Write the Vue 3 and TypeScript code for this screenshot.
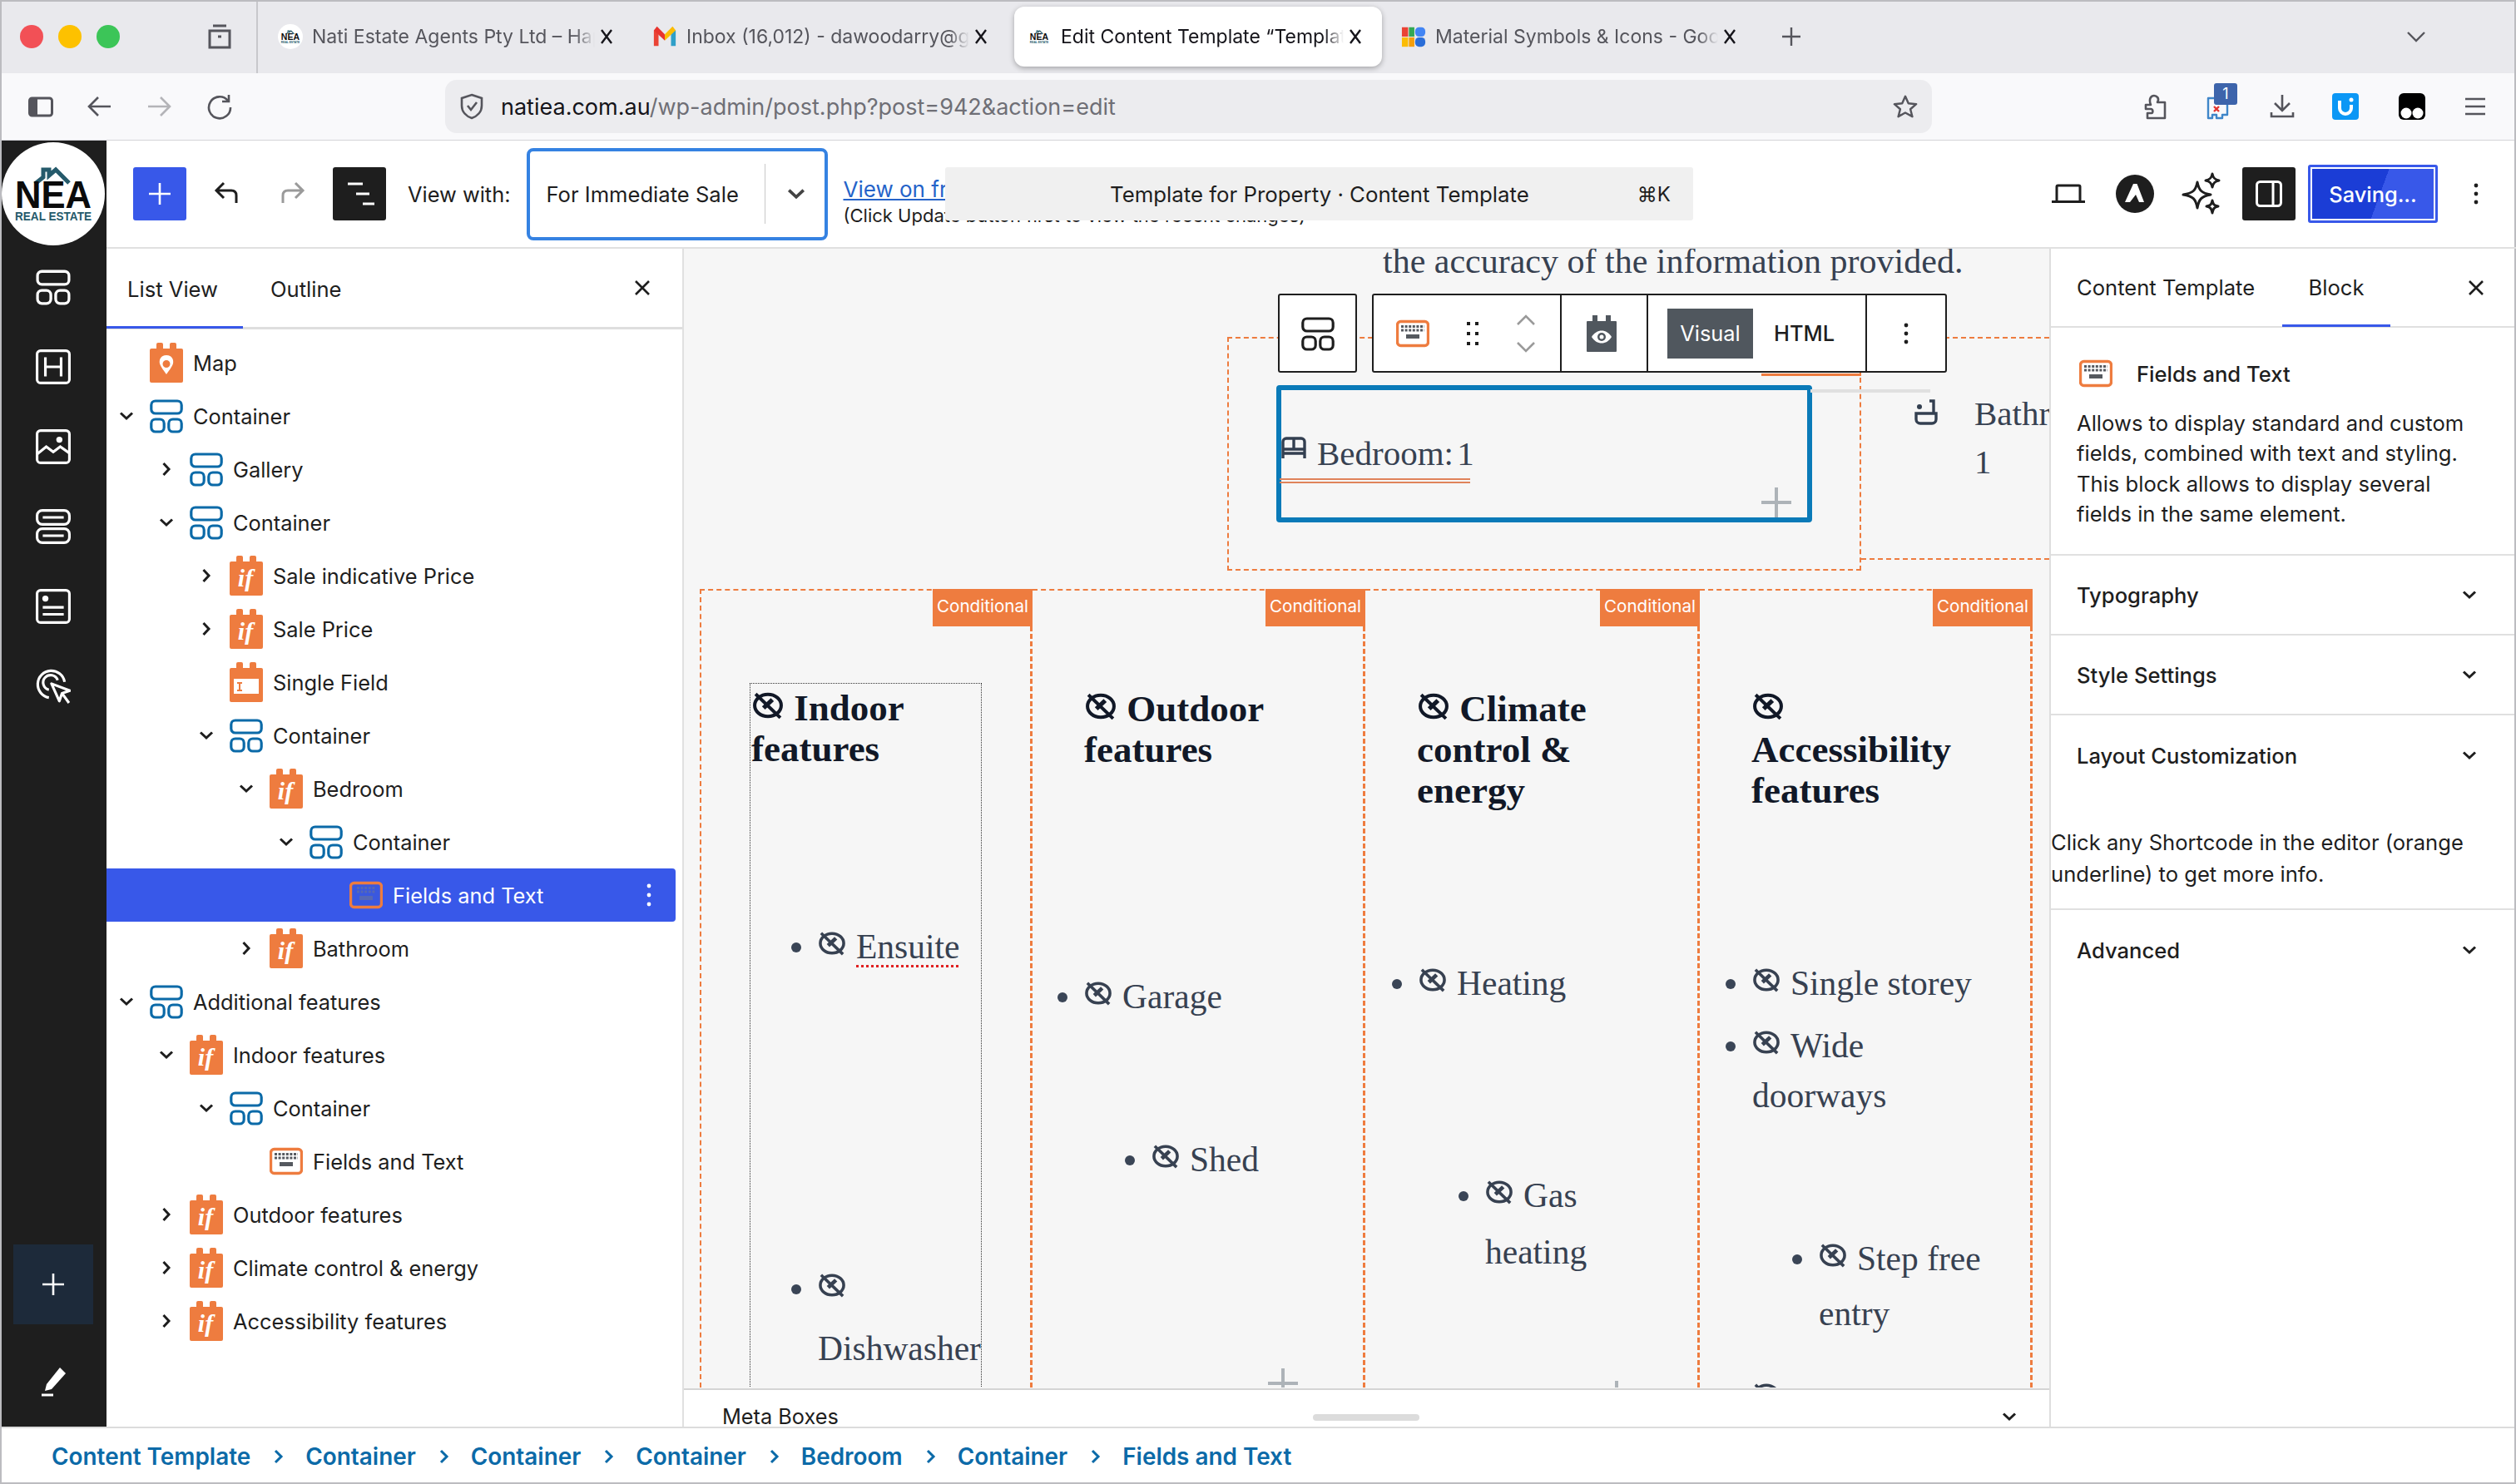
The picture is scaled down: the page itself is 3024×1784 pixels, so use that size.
<script setup lang="ts">
interface TreeRow {
  label: string;
  level: number;
  icon: string;
  arrow?: "down" | "right";
  selected?: boolean;
}
interface ListItem {
  text: string;
  mt: number;
  indent: number;
  lh: number;
  misspelt?: boolean;
}
interface Column {
  title: string;
  items: ListItem[];
  plusTop?: number;
  plusLeft?: number;
  framed?: boolean;
  width: number;
  pad: number;
}

const tabs = [
  { title: "Nati Estate Agents Pty Ltd – Happy Customers", icon: "i-logo", active: false },
  { title: "Inbox (16,012) - dawoodarry@gmail.com", icon: "i-gmail", active: false },
  { title: "Edit Content Template “Template for Property”", icon: "i-logo", active: true },
  { title: "Material Symbols & Icons - Google Fonts", icon: "i-material", active: false },
];

const railIcons = ["i-rail-container", "i-rail-heading", "i-rail-image", "i-rail-rows", "i-rail-card", "i-rail-target"];

const tree: TreeRow[] = [
  { label: "Map", level: 0, icon: "i-map" },
  { label: "Container", level: 0, icon: "i-container", arrow: "down" },
  { label: "Gallery", level: 1, icon: "i-container", arrow: "right" },
  { label: "Container", level: 1, icon: "i-container", arrow: "down" },
  { label: "Sale indicative Price", level: 2, icon: "i-if", arrow: "right" },
  { label: "Sale Price", level: 2, icon: "i-if", arrow: "right" },
  { label: "Single Field", level: 2, icon: "i-field" },
  { label: "Container", level: 2, icon: "i-container", arrow: "down" },
  { label: "Bedroom", level: 3, icon: "i-if", arrow: "down" },
  { label: "Container", level: 4, icon: "i-container", arrow: "down" },
  { label: "Fields and Text", level: 5, icon: "i-kb-sel", selected: true },
  { label: "Bathroom", level: 3, icon: "i-if", arrow: "right" },
  { label: "Additional features", level: 0, icon: "i-container", arrow: "down" },
  { label: "Indoor features", level: 1, icon: "i-if", arrow: "down" },
  { label: "Container", level: 2, icon: "i-container", arrow: "down" },
  { label: "Fields and Text", level: 3, icon: "i-kb" },
  { label: "Outdoor features", level: 1, icon: "i-if", arrow: "right" },
  { label: "Climate control & energy", level: 1, icon: "i-if", arrow: "right" },
  { label: "Accessibility features", level: 1, icon: "i-if", arrow: "right" },
];

const columns: Column[] = [
  {
    title: "Indoor features",
    framed: true,
    width: 400,
    pad: 58,
    items: [
      { text: "Ensuite", mt: 180, indent: 80, lh: 66, misspelt: true },
      { text: "Dishwasher", mt: 342, indent: 80, lh: 72 },
    ],
  },
  {
    title: "Outdoor features",
    width: 400,
    pad: 62,
    plusLeft: 283,
    plusTop: 935,
    items: [
      { text: "Garage", mt: 239, indent: 0, lh: 66 },
      { text: "Shed", mt: 130, indent: 81, lh: 66 },
    ],
  },
  {
    title: "Climate control & energy",
    width: 402,
    pad: 62,
    plusLeft: 284,
    plusTop: 950,
    items: [
      { text: "Heating", mt: 174, indent: 2, lh: 66 },
      { text: "Gas heating", mt: 188, indent: 82, lh: 68 },
    ],
  },
  {
    title: "Accessibility features",
    width: 400,
    pad: 62,
    items: [
      { text: "Single storey", mt: 174, indent: 1, lh: 66 },
      { text: "Wide doorways", mt: 12, indent: 1, lh: 60 },
      { text: "Step free entry", mt: 133, indent: 81, lh: 66 },
      { text: "", mt: 36, indent: 1, lh: 66 },
    ],
  },
];

const panelRows = ["Typography", "Style Settings", "Layout Customization"];
const crumbs = ["Content Template", "Container", "Container", "Container", "Bedroom", "Container", "Fields and Text"];
</script>

<template>
  <div class="app">
    <svg class="sprite" aria-hidden="true">
      <symbol id="i-logo" viewBox="0 0 124 124">
        <circle cx="62" cy="62" r="62" fill="#fff" />
        <path d="M40 50 L50 42 V33 H57 V40 L65 33 L81 49" fill="none" stroke="#255a6b" stroke-width="5" />
        <text x="62" y="79" text-anchor="middle" font-family="Liberation Sans" font-weight="700" font-size="47" textLength="92" lengthAdjust="spacingAndGlyphs" fill="#0b0b0b">NEA</text>
        <text x="62" y="94" text-anchor="middle" font-family="Liberation Sans" font-weight="700" font-size="15" textLength="92" lengthAdjust="spacingAndGlyphs" fill="#255a6b">REAL ESTATE</text>
      </symbol>
      <symbol id="i-gmail" viewBox="0 0 32 32">
        <path d="M24 28 V6 L30 8 V28 Z" fill="#2f9fc8" />
        <path d="M30 8 L26 3 L16 13 L16 21 Z" fill="#fbbc04" />
        <path d="M2 28 V8 L8 6 V28 Z" fill="#ea4335" />
        <path d="M2 8 L6 3 L16 13 L16 21 Z" fill="#e8342e" />
      </symbol>
      <symbol id="i-material" viewBox="0 0 32 32">
        <rect x="1" y="4" width="8" height="12" fill="#ea4335" />
        <rect x="1" y="17" width="8" height="12" fill="#fbbc04" />
        <rect x="10" y="4" width="7" height="12" fill="#34a853" />
        <rect x="10" y="17" width="7" height="12" fill="#f59e0b" />
        <rect x="18" y="4" width="13" height="12" rx="5" fill="#4285f4" />
        <rect x="18" y="17" width="13" height="12" rx="5" fill="#2b6ed8" />
      </symbol>
      <symbol id="i-x" viewBox="0 0 20 20">
        <path d="M4 2 L16 18 M16 2 L4 18" stroke="currentColor" stroke-width="2.4" fill="none" />
      </symbol>
      <symbol id="i-chev" viewBox="0 0 24 24">
        <path d="M5 8.5 L12 15 L19 8.5" stroke="currentColor" stroke-width="3" fill="none" />
      </symbol>
      <symbol id="i-container" viewBox="0 0 40 48">
        <rect x="1.8" y="6" width="36.4" height="15" rx="5" fill="none" stroke="currentColor" stroke-width="3.2" />
        <rect x="1.8" y="28" width="15.4" height="15" rx="5" fill="none" stroke="currentColor" stroke-width="3.2" />
        <rect x="22.8" y="28" width="15.4" height="15" rx="5" fill="none" stroke="currentColor" stroke-width="3.2" />
      </symbol>
      <symbol id="i-if" viewBox="0 0 40 48">
        <rect x="8" y="0" width="8" height="12" rx="2" fill="#ee7c3f" />
        <rect x="24" y="0" width="8" height="12" rx="2" fill="#ee7c3f" />
        <rect x="0" y="7" width="40" height="41" rx="2" fill="#ee7c3f" />
        <text x="19" y="37" text-anchor="middle" font-family="Liberation Serif" font-style="italic" font-weight="700" font-size="30" fill="#fff">if</text>
      </symbol>
      <symbol id="i-map" viewBox="0 0 40 48">
        <rect x="8" y="0" width="8" height="12" rx="2" fill="#ee7c3f" />
        <rect x="24" y="0" width="8" height="12" rx="2" fill="#ee7c3f" />
        <rect x="0" y="7" width="40" height="41" rx="2" fill="#ee7c3f" />
        <path fill-rule="evenodd" d="M20 15 C13 15 11 21 12 25 C13 29 18 35 20 38 C22 35 27 29 28 25 C29 21 27 15 20 15 Z M20 21 A4.5 4.5 0 1 1 20 30 A4.5 4.5 0 1 1 20 21 Z" fill="#fff" />
      </symbol>
      <symbol id="i-field" viewBox="0 0 40 48">
        <rect x="8" y="0" width="8" height="12" rx="2" fill="#ee7c3f" />
        <rect x="24" y="0" width="8" height="12" rx="2" fill="#ee7c3f" />
        <rect x="0" y="7" width="40" height="41" rx="2" fill="#ee7c3f" />
        <rect x="5" y="20" width="30" height="18" fill="#fff" />
        <path d="M9 25 H15 M9 34 H15 M12 25 V34" stroke="#ee7c3f" stroke-width="2" fill="none" />
      </symbol>
      <symbol id="i-kb" viewBox="0 0 40 48">
        <rect x="1.5" y="9.5" width="37" height="29" rx="4" fill="#fff" stroke="#ee7c3f" stroke-width="3.4" />
        <path d="M6 15.5 H34 M6 20 H34" stroke="#55595f" stroke-width="3" stroke-dasharray="3 1.6" fill="none" />
        <rect x="12" y="25" width="16" height="5" fill="#55595f" />
      </symbol>
      <symbol id="i-kb-sel" viewBox="0 0 40 48">
        <rect x="1.5" y="9.5" width="37" height="29" rx="4" fill="#3a58df" stroke="#ee7c3f" stroke-width="3.4" />
        <path d="M9 15.5 H31 M9 20 H31" stroke="#5668b5" stroke-width="3" stroke-dasharray="3 1.6" fill="none" />
        <rect x="12" y="25" width="16" height="5" fill="#5668b5" />
      </symbol>
      <symbol id="i-eye-off" viewBox="0 0 36 32">
        <ellipse cx="18" cy="16" rx="15" ry="12.5" fill="none" stroke="currentColor" stroke-width="3.8" />
        <path d="M4 3 L32 30" stroke="currentColor" stroke-width="3.8" fill="none" />
        <path d="M13 19 L23 9.5" stroke="currentColor" stroke-width="5" fill="none" />
      </symbol>
      <symbol id="i-rail-heading" viewBox="0 0 40 40">
        <rect x="1.5" y="1.5" width="37" height="37" rx="4" fill="none" stroke="currentColor" stroke-width="3" />
        <path d="M11 9 V31 M29 9 V31 M11 20 H29" stroke="currentColor" stroke-width="3" fill="none" />
      </symbol>
      <symbol id="i-rail-image" viewBox="0 0 40 40">
        <rect x="1.5" y="1.5" width="37" height="37" rx="4" fill="none" stroke="currentColor" stroke-width="3" />
        <path d="M2 28 L12 20 L20 26 L28 20 L38 27" stroke="currentColor" stroke-width="3" fill="none" />
        <circle cx="27" cy="12" r="3.5" fill="currentColor" />
      </symbol>
      <symbol id="i-rail-rows" viewBox="0 0 40 40">
        <rect x="1.5" y="1.5" width="37" height="16" rx="6" fill="none" stroke="currentColor" stroke-width="3" />
        <rect x="1.5" y="22.5" width="37" height="16" rx="6" fill="none" stroke="currentColor" stroke-width="3" />
        <path d="M8 9.5 H32 M8 30.5 H32" stroke="currentColor" stroke-width="3" fill="none" />
      </symbol>
      <symbol id="i-rail-card" viewBox="0 0 40 40">
        <rect x="1.5" y="1.5" width="37" height="37" rx="4" fill="none" stroke="currentColor" stroke-width="3" />
        <circle cx="11" cy="11" r="3.5" fill="currentColor" />
        <path d="M8 21 H32 M8 29 H32" stroke="currentColor" stroke-width="3" fill="none" />
      </symbol>
      <symbol id="i-rail-target" viewBox="0 0 40 40">
        <path d="M15 33 A15.5 15.5 0 1 1 33 15" stroke="currentColor" stroke-width="3" fill="none" />
        <path d="M15 24 A8.5 8.5 0 1 1 25 13" stroke="currentColor" stroke-width="3" fill="none" />
        <path d="M18 17 L39 25 L30 28 L27 37 Z M30 28 L38 39" stroke="currentColor" stroke-width="3" stroke-linejoin="round" fill="none" />
      </symbol>
    </svg>

    <!-- browser chrome -->
    <header class="tabbar">
      <span class="light red"></span>
      <span class="light amber"></span>
      <span class="light green"></span>
      <svg class="group-ic" viewBox="0 0 30 30">
        <path d="M7 2 H23 M3 8 H27 V28 H3 Z M13 15 H17" fill="none" stroke="#55555c" stroke-width="3" />
      </svg>
      <span class="tab-sep"></span>
      <div class="tabs">
        <div v-for="tab in tabs" :key="tab.title" class="tab" :class="{ active: tab.active }">
          <svg class="tab-ic"><use :href="'#' + tab.icon" /></svg>
          <span class="tab-title">{{ tab.title }}</span>
          <svg class="tab-x"><use href="#i-x" /></svg>
        </div>
      </div>
      <svg class="new-tab" viewBox="0 0 24 24">
        <path d="M12 1 V23 M1 12 H23" stroke="#55555c" stroke-width="2.4" />
      </svg>
      <svg class="tab-list" viewBox="0 0 24 24">
        <path d="M2 7 L12 17 L22 7" stroke="#55555c" stroke-width="2.4" fill="none" />
      </svg>
    </header>

    <nav class="navbar">
      <svg class="nav-ic first" viewBox="0 0 32 32">
        <rect x="2.5" y="6" width="27" height="21" rx="3" fill="none" stroke="#55555c" stroke-width="3" />
        <rect x="4" y="7" width="8" height="19" fill="#55555c" />
      </svg>
      <svg class="nav-ic" viewBox="0 0 32 32">
        <path d="M29 16 H4 M14 5 L3 16 L14 27" fill="none" stroke="#55555c" stroke-width="2.6" />
      </svg>
      <svg class="nav-ic" viewBox="0 0 32 32">
        <path d="M3 16 H28 M18 5 L29 16 L18 27" fill="none" stroke="#b4b4b8" stroke-width="2.6" />
      </svg>
      <svg class="nav-ic reload" viewBox="0 0 32 32">
        <path d="M26 9 A13 13 0 1 0 29 17 M27 2 V10 H19" fill="none" stroke="#55555c" stroke-width="2.6" />
      </svg>
      <div class="urlbar">
        <svg class="shield" viewBox="0 0 28 32">
          <path d="M14 2 L26 6 V15 C26 23 20 28 14 30 C8 28 2 23 2 15 V6 Z M9 15 L13 20 L20 11" fill="none" stroke="#55555c" stroke-width="2.6" />
        </svg>
        <span class="url"><b>natiea.com.au</b>/wp-admin/post.php?post=942&amp;action=edit</span>
        <svg class="star" viewBox="0 0 32 32">
          <path d="M16 3 L20 12 L30 13 L22.5 19.5 L25 29 L16 24 L7 29 L9.5 19.5 L2 13 L12 12 Z" fill="none" stroke="#55555c" stroke-width="2.6" stroke-linejoin="round" />
        </svg>
      </div>
      <div class="extensions">
        <svg class="ext" viewBox="0 0 32 32">
          <path d="M4 14 H10 C7 6 11 3 14 3 C17 3 21 6 18 11 H27 V30 H6 V24 H11 C13 24 13 19 10 19 H4 Z" fill="none" stroke="#55555c" stroke-width="2.6" stroke-linejoin="round" />
        </svg>
        <div class="ext badge-wrap">
          <svg viewBox="0 0 32 32" width="32" height="32">
            <path d="M3 6 H26 V26 H20 V30 H13 V26 H8 V30 H3 Z" fill="none" stroke="#3f86c9" stroke-width="2.4" stroke-linejoin="round" />
            <path d="M10 16 L16 22 M16 16 L10 22" stroke="#e3342f" stroke-width="2.4" />
          </svg>
          <span class="ext-count">1</span>
        </div>
        <svg class="ext" viewBox="0 0 32 32">
          <path d="M16 2 V21 M7 12 L16 21 L25 12 M3 23 V28 H29 V23" fill="none" stroke="#55555c" stroke-width="2.6" />
        </svg>
        <svg class="ext" viewBox="0 0 32 32">
          <rect width="32" height="32" rx="4" fill="#0b97f5" />
          <path d="M9 9 V18 A7 7 0 0 0 23 18 V14" fill="none" stroke="#fff" stroke-width="4" />
          <circle cx="23" cy="8" r="2.5" fill="#fff" />
        </svg>
        <svg class="ext black" viewBox="0 0 32 32">
          <rect width="32" height="32" rx="6" fill="#000" />
          <circle cx="9" cy="24" r="6.5" fill="#fff" />
          <circle cx="23" cy="24" r="6.5" fill="#fff" />
        </svg>
        <svg class="ext" viewBox="0 0 32 32">
          <path d="M4 7 H28 M4 16 H28 M4 25 H28" stroke="#55555c" stroke-width="2.6" />
        </svg>
      </div>
    </nav>

    <!-- wordpress editor -->
    <div class="wp">
      <aside class="rail">
        <svg class="rail-logo"><use href="#i-logo" /></svg>
        <div v-for="icon in railIcons" :key="icon" class="rail-item">
          <svg v-if="icon === 'i-rail-container'" viewBox="0 0 40 48" class="rail-ic tall"><use href="#i-container" /></svg>
          <svg v-else viewBox="0 0 40 40" class="rail-ic"><use :href="'#' + icon" /></svg>
        </div>
        <div class="rail-add">
          <svg viewBox="0 0 26 26" width="26" height="26">
            <path d="M13 0 V26 M0 13 H26" stroke="#fff" stroke-width="2.6" />
          </svg>
        </div>
        <div class="rail-item rail-pen">
          <svg viewBox="0 0 32 40" width="32" height="40">
            <path d="M24 4 L31 11 L14 30 L6 32 L8 24 Z" fill="#fff" />
            <path d="M2 37 H16" stroke="#fff" stroke-width="3" />
          </svg>
        </div>
      </aside>

      <div class="editor">
        <div class="wp-toolbar">
          <button class="tb-add">
            <svg viewBox="0 0 26 26" width="26" height="26"><path d="M13 0 V26 M0 13 H26" stroke="#fff" stroke-width="2.6" /></svg>
          </button>
          <svg class="undo" viewBox="0 0 32 32">
            <path d="M28 27 V18 C28 14 26 12 22 12 H5 M13 3 L4 12 L13 21" fill="none" stroke="#1e1e1e" stroke-width="3" />
          </svg>
          <svg class="redo" viewBox="0 0 32 32">
            <path d="M4 27 V18 C4 14 6 12 10 12 H27 M19 3 L28 12 L19 21" fill="none" stroke="#9a9a9a" stroke-width="3" />
          </svg>
          <button class="tb-list">
            <svg viewBox="0 0 36 36" width="36" height="36">
              <path d="M4 6 H22 M14 18 H30 M22 30 H36" stroke="#fff" stroke-width="3.2" />
            </svg>
          </button>
          <span class="view-with">View with:</span>
          <div class="select">
            <span>For Immediate Sale</span>
            <i class="select-div"></i>
            <svg class="select-chev"><use href="#i-chev" /></svg>
          </div>
          <div class="view-link">
            <a>View on front-end</a>
            <small>(Click Update button first to view the recent changes)</small>
          </div>
          <div class="command">
            <span class="command-title">Template for Property · Content Template</span>
            <span class="command-key">⌘K</span>
          </div>
          <div class="tb-right">
            <svg class="laptop" viewBox="0 0 40 24">
              <path d="M6 20 V3.5 A1.5 1.5 0 0 1 7.5 2 H32.5 A1.5 1.5 0 0 1 34 3.5 V20" fill="none" stroke="#1e1e1e" stroke-width="3" />
              <path d="M0 21.5 H40" stroke="#1e1e1e" stroke-width="3" />
            </svg>
            <svg class="astra" viewBox="0 0 46 46">
              <circle cx="23" cy="23" r="23" fill="#1e1e1e" />
              <path d="M21 11 H25.5 L34 33 H28 L24 24 L17 33 H11 Z" fill="#fff" />
            </svg>
            <svg class="sparkle" viewBox="0 0 52 52">
              <path d="M20 12 C22 22 25 25 36 27 C25 29 22 32 20 43 C18 32 15 29 3 27 C15 25 18 22 20 12 Z M38 2 C39 7 41 9 46 10 C41 11 39 13 38 18 C37 13 35 11 30 10 C35 9 37 7 38 2 Z M38 34 C39 39 40 40 45 41 C40 42 39 44 38 49 C37 44 36 42 31 41 C36 40 37 39 38 34 Z" fill="none" stroke="#1e1e1e" stroke-width="3" stroke-linejoin="round" />
            </svg>
            <button class="tb-panel">
              <svg viewBox="0 0 32 32" width="32" height="32">
                <rect x="1.5" y="1.5" width="29" height="29" rx="4" fill="none" stroke="#fff" stroke-width="3" />
                <path d="M21 2 V30" stroke="#fff" stroke-width="3" />
              </svg>
            </button>
            <button class="saving">Saving...</button>
            <svg class="more" viewBox="0 0 32 32">
              <circle cx="16" cy="6" r="2.4" fill="#1e1e1e" />
              <circle cx="16" cy="16" r="2.4" fill="#1e1e1e" />
              <circle cx="16" cy="26" r="2.4" fill="#1e1e1e" />
            </svg>
          </div>
        </div>

        <div class="workspace">
          <section class="listview">
            <div class="lv-head">
              <span class="lv-tab current">List View</span>
              <span class="lv-tab">Outline</span>
              <svg class="lv-close" viewBox="0 0 20 20"><path d="M2 2 L18 18 M18 2 L2 18" stroke="#1e1e1e" stroke-width="2.6" /></svg>
            </div>
            <div class="lv-rows">
              <div
                v-for="(row, i) in tree"
                :key="i"
                class="lv-row"
                :class="{ selected: row.selected }"
                :style="{ paddingLeft: 8 + row.level * 48 + 'px' }"
              >
                <span class="lv-arrow">
                  <svg v-if="row.arrow" :class="row.arrow"><use href="#i-chev" /></svg>
                </span>
                <svg class="lv-ic"><use :href="'#' + row.icon" /></svg>
                <span class="lv-label">{{ row.label }}</span>
                <svg v-if="row.selected" class="lv-more" viewBox="0 0 8 32">
                  <circle cx="4" cy="5" r="2.4" fill="#fff" />
                  <circle cx="4" cy="16" r="2.4" fill="#fff" />
                  <circle cx="4" cy="27" r="2.4" fill="#fff" />
                </svg>
              </div>
            </div>
          </section>

          <section class="canvas-wrap">
            <div class="canvas">
              <p class="note">the accuracy of the information provided.</p>

              <div class="block-toolbar">
                <div class="bt-group bt-parent">
                  <svg viewBox="0 0 40 48" width="40" height="48" class="bt-dark"><use href="#i-container" /></svg>
                </div>
                <div class="bt-group bt-main">
                  <div class="bt-seg bt-move">
                    <svg class="bt-kb"><use href="#i-kb" /></svg>
                    <svg class="bt-drag" viewBox="0 0 20 32">
                      <path d="M3 2 H7 V6 H3 Z M13 2 H17 V6 H13 Z M3 14 H7 V18 H3 Z M13 14 H17 V18 H13 Z M3 26 H7 V30 H3 Z M13 26 H17 V30 H13 Z" fill="#1e1e1e" />
                    </svg>
                    <div class="bt-arrows">
                      <svg viewBox="0 0 24 14" width="24" height="14"><path d="M2 12 L12 2 L22 12" fill="none" stroke="#9a9a9a" stroke-width="2.6" /></svg>
                      <svg viewBox="0 0 24 14" width="24" height="14"><path d="M2 2 L12 12 L22 2" fill="none" stroke="#9a9a9a" stroke-width="2.6" /></svg>
                    </div>
                  </div>
                  <div class="bt-seg bt-eye">
                    <svg viewBox="0 0 36 44" width="36" height="44">
                      <rect x="7" y="0" width="6" height="8" fill="#50575e" />
                      <rect x="23" y="0" width="6" height="8" fill="#50575e" />
                      <rect x="0" y="7" width="36" height="37" rx="1" fill="#50575e" />
                      <path d="M6 26 C12 16 24 16 30 26 C24 36 12 36 6 26 Z" fill="#fff" />
                      <circle cx="18" cy="26" r="5" fill="#50575e" />
                      <circle cx="18" cy="26" r="2.5" fill="#fff" />
                    </svg>
                  </div>
                  <div class="bt-seg bt-mode">
                    <span class="bt-visual">Visual</span>
                    <span class="bt-html">HTML</span>
                  </div>
                  <div class="bt-seg bt-dots">
                    <svg class="more" viewBox="0 0 32 32">
                      <circle cx="16" cy="6" r="2.4" fill="#1e1e1e" />
                      <circle cx="16" cy="16" r="2.4" fill="#1e1e1e" />
                      <circle cx="16" cy="26" r="2.4" fill="#1e1e1e" />
                    </svg>
                  </div>
                </div>
              </div>

              <div class="upper">
                <div class="cond-box">
                  <i class="orange-bit"></i>
                  <div class="picked">
                    <div class="bed-line">
                      <svg class="bed-ic" viewBox="0 0 30 26">
                        <path d="M2 26 V6 A4 4 0 0 1 6 2 H24 A4 4 0 0 1 28 6 V26 M2 15 H28 M2 20 H28 M15 3 V14" fill="none" stroke="#333f50" stroke-width="3.4" />
                      </svg>
                      <span>Bedroom: 1</span>
                    </div>
                    <svg class="picked-plus" viewBox="0 0 36 36"><path d="M18 0 V36 M0 18 H36" stroke="#adb3b8" stroke-width="4" /></svg>
                  </div>
                  <i class="gray-bit"></i>
                </div>
                <div class="bath-box">
                  <svg class="bath-ic" viewBox="0 0 30 34">
                    <path d="M3 19 H27 V26 A5 5 0 0 1 22 31 H8 A5 5 0 0 1 3 26 Z" fill="none" stroke="#333f50" stroke-width="3.4" />
                    <path d="M24 19 V4 H19" fill="none" stroke="#333f50" stroke-width="3.4" />
                    <circle cx="7" cy="11" r="3" fill="#333f50" />
                  </svg>
                  <div class="bath-text">
                    <div>Bathroom: 1</div>
                    <div>1</div>
                  </div>
                </div>
              </div>

              <div class="columns">
                <article
                  v-for="col in columns"
                  :key="col.title"
                  class="col"
                  :style="{ width: col.width + 'px', paddingLeft: col.pad + 'px' }"
                >
                  <span class="badge">Conditional</span>
                  <div class="col-inner" :class="{ framed: col.framed }">
                    <h3 class="col-title">
                      <svg class="eye-big"><use href="#i-eye-off" /></svg>
                      {{ col.title }}
                    </h3>
                    <ul class="col-list">
                      <li
                        v-for="item in col.items"
                        :key="item.text"
                        :style="{ marginTop: item.mt + 'px', marginLeft: item.indent + 'px', lineHeight: item.lh + 'px' }"
                      >
                        <svg class="eye-small"><use href="#i-eye-off" /></svg>
                        <span :class="{ misspelt: item.misspelt }">{{ item.text }}</span>
                      </li>
                    </ul>
                  </div>
                  <svg
                    v-if="col.plusTop"
                    class="col-plus"
                    viewBox="0 0 36 36"
                    :style="{ left: col.plusLeft + 'px', top: col.plusTop + 'px' }"
                  >
                    <path d="M18 0 V36 M0 18 H36" stroke="#adb3b8" stroke-width="4" />
                  </svg>
                </article>
              </div>
            </div>

            <div class="meta">
              <span>Meta Boxes</span>
              <i class="meta-handle"></i>
              <svg class="meta-chev"><use href="#i-chev" /></svg>
            </div>
          </section>

          <aside class="inspector">
            <div class="ins-head">
              <span class="ins-tab">Content Template</span>
              <span class="ins-tab current">Block</span>
              <svg class="ins-close" viewBox="0 0 20 20"><path d="M2 2 L18 18 M18 2 L2 18" stroke="#1e1e1e" stroke-width="2.6" /></svg>
            </div>
            <div class="ins-card">
              <div class="ins-card-title">
                <svg class="ins-kb"><use href="#i-kb" /></svg>
                <span>Fields and Text</span>
              </div>
              <p>Allows to display standard and custom fields, combined with text and styling. This block allows to display several fields in the same element.</p>
            </div>
            <div v-for="(name, i) in panelRows" :key="name" class="ins-row" :class="{ last: i === panelRows.length - 1 }">
              <span>{{ name }}</span>
              <svg class="ins-chev"><use href="#i-chev" /></svg>
            </div>
            <p class="ins-help">Click any Shortcode in the editor (orange underline) to get more info.</p>
            <div class="ins-row advanced">
              <span>Advanced</span>
              <svg class="ins-chev"><use href="#i-chev" /></svg>
            </div>
          </aside>
        </div>
      </div>
    </div>

    <footer class="crumbs">
      <template v-for="(crumb, i) in crumbs" :key="i">
        <svg v-if="i > 0" class="crumb-chev" viewBox="0 0 24 24"><path d="M9 5 L16 12 L9 19" fill="none" stroke="#0b6aa8" stroke-width="3" /></svg>
        <span class="crumb">{{ crumb }}</span>
      </template>
    </footer>
  </div>
</template>

<style>
html,
body {
  margin: 0;
  background: #fff;
}
</style>

<style scoped>
.app {
  position: relative;
  width: 3024px;
  height: 1784px;
  overflow: hidden;
  background: #fff;
  font-family: Inter, "Liberation Sans", sans-serif;
  color: #1e1e1e;
  outline: 2px solid #bcbcc0;
  outline-offset: -2px;
}
.sprite {
  position: absolute;
  width: 0;
  height: 0;
}
button {
  border: 0;
  padding: 0;
  font-family: inherit;
}

/* browser chrome */
.tabbar {
  height: 88px;
  box-sizing: border-box;
  background: #e9e9ed;
  display: flex;
  align-items: center;
  padding-left: 24px;
}
.light {
  width: 28px;
  height: 28px;
  border-radius: 50%;
  margin-right: 18px;
}
.red { background: #f25056; }
.amber { background: #fdc100; }
.green { background: #3cc558; margin-right: 0; }
.group-ic {
  width: 30px;
  height: 30px;
  margin-left: 105px;
}
.tab-sep {
  width: 2px;
  height: 88px;
  margin-left: 29px;
  background: #c8c8cc;
}
.tabs {
  display: flex;
  gap: 8px;
  margin-left: 9px;
}
.tab {
  width: 442px;
  height: 72px;
  box-sizing: border-box;
  padding: 0 22px 0 15px;
  display: flex;
  align-items: center;
  color: #55555c;
  font-size: 23px;
  border-radius: 12px;
}
.tab.active {
  background: #fff;
  color: #15141a;
  box-shadow: 0 2px 6px rgba(0, 0, 0, 0.3);
}
.tab-ic {
  width: 30px;
  height: 30px;
  flex: none;
}
.tab-title {
  flex: 1;
  margin: 0 4px 0 11px;
  overflow: hidden;
  white-space: nowrap;
  -webkit-mask-image: linear-gradient(90deg, #000 93%, transparent);
  mask-image: linear-gradient(90deg, #000 93%, transparent);
}
.tab-x {
  width: 20px;
  height: 20px;
  flex: none;
  color: #15141a;
}
.new-tab {
  width: 24px;
  height: 24px;
  margin-left: 30px;
}
.tab-list {
  width: 24px;
  height: 24px;
  margin-left: auto;
  margin-right: 108px;
}

.navbar {
  height: 81px;
  box-sizing: border-box;
  background: #f9f9fb;
  border-bottom: 1px solid #d4d4d8;
  display: flex;
  align-items: center;
  padding-left: 33px;
}
.nav-ic {
  width: 32px;
  height: 32px;
  margin-left: 39px;
}
.nav-ic.first {
  margin-left: 0;
}
.nav-ic.reload {
  margin-left: 41px;
}
.urlbar {
  width: 1787px;
  height: 64px;
  margin-left: 255px;
  box-sizing: border-box;
  padding: 0 17px 0 18px;
  background: #ececef;
  border-radius: 14px;
  display: flex;
  align-items: center;
}
.shield {
  width: 28px;
  height: 32px;
}
.url {
  margin-left: 21px;
  font-size: 27px;
  color: #6f6f76;
}
.url b {
  font-weight: 400;
  color: #15141a;
}
.star {
  width: 30px;
  height: 30px;
  margin-left: auto;
}
.extensions {
  display: flex;
  align-items: center;
  gap: 44px;
  margin-left: 253px;
}
.ext {
  position: relative;
  width: 32px;
  height: 32px;
  flex: none;
}
.ext.black {
  margin-left: 4px;
}
.ext-count {
  position: absolute;
  left: 10px;
  top: -12px;
  width: 28px;
  height: 26px;
  border-radius: 3px;
  background: #3d64ab;
  color: #fff;
  font-size: 18px;
  text-align: center;
  line-height: 26px;
}

/* editor layout */
.wp {
  display: flex;
  height: 1546px;
}
.rail {
  width: 128px;
  flex: none;
  background: #1e1e1e;
  display: flex;
  flex-direction: column;
  align-items: center;
  color: #fff;
}
.rail-logo {
  width: 124px;
  height: 124px;
  margin: 2px 0 2px;
  flex: none;
}
.rail-item {
  height: 96px;
  flex: none;
  display: flex;
  align-items: center;
  justify-content: center;
}
.rail-ic {
  width: 42px;
  height: 42px;
}
.rail-ic.tall {
  width: 42px;
  height: 50px;
}
.rail-add {
  width: 96px;
  height: 96px;
  margin-top: auto;
  flex: none;
  background: #1d2a3a;
  display: flex;
  align-items: center;
  justify-content: center;
}
.rail-pen {
  margin-top: 20px;
  margin-bottom: 7px;
}
.editor {
  flex: 1;
  min-width: 0;
  display: flex;
  flex-direction: column;
}
.wp-toolbar {
  position: relative;
  height: 130px;
  flex: none;
  box-sizing: border-box;
  border-bottom: 2px solid #e0e0e0;
  display: flex;
  align-items: center;
  padding-left: 32px;
  padding-right: 32px;
}
.tb-add,
.tb-list {
  width: 64px;
  height: 64px;
  flex: none;
  display: flex;
  align-items: center;
  justify-content: center;
  border-radius: 3px;
  background: #3858e9;
}
.tb-list {
  background: #1e1e1e;
  margin-left: 32px;
}
.undo,
.redo {
  width: 32px;
  height: 32px;
  flex: none;
  margin-left: 32px;
}
.redo {
  margin-left: 48px;
}
.view-with {
  margin-left: 26px;
  font-size: 25.4px;
  white-space: nowrap;
}
.select {
  width: 362px;
  height: 111px;
  flex: none;
  margin-left: 19px;
  box-sizing: border-box;
  border: 4px solid #3582e2;
  border-radius: 8px;
  padding-left: 20px;
  display: flex;
  align-items: center;
  font-size: 25.6px;
  white-space: nowrap;
}
.select-div {
  width: 1px;
  height: 72px;
  margin-left: 31px;
  background: #c8c8c8;
}
.select-chev {
  width: 30px;
  height: 30px;
  margin-left: 22px;
  color: #444;
}
.view-link {
  margin-left: 19px;
  padding-top: 18px;
  flex: none;
  white-space: nowrap;
  display: flex;
  flex-direction: column;
}
.view-link a {
  font-size: 26px;
  line-height: 34px;
  color: #2563c9;
  text-decoration: underline;
}
.view-link small {
  font-size: 22px;
  line-height: 28px;
  color: #1e1e1e;
}
.command {
  position: absolute;
  left: 1008px;
  top: 32px;
  width: 899px;
  height: 64px;
  box-sizing: border-box;
  background: #f0f0f0;
  border-radius: 3px;
  display: flex;
  align-items: center;
  font-size: 25.8px;
}
.command-title {
  margin-left: 198px;
}
.command-key {
  margin-left: auto;
  margin-right: 27px;
  font-size: 24px;
}
.tb-right {
  position: absolute;
  right: 32px;
  top: 0;
  height: 128px;
  display: flex;
  align-items: center;
}
.laptop {
  width: 40px;
  height: 24px;
}
.astra {
  width: 46px;
  height: 46px;
  margin-left: 37px;
}
.sparkle {
  width: 52px;
  height: 52px;
  margin-left: 32px;
}
.tb-panel {
  width: 64px;
  height: 64px;
  margin-left: 22px;
  background: #1e1e1e;
  border-radius: 3px;
  display: flex;
  align-items: center;
  justify-content: center;
}
.saving {
  width: 156px;
  height: 70px;
  margin-left: 15px;
  border: 3px solid #3858e9;
  box-shadow: inset 0 0 0 2px #fff;
  background: linear-gradient(110deg, #1b3dd6 55%, #3858e9 55%);
  color: #fff;
  font-size: 25.4px;
  font-weight: 500;
  border-radius: 3px;
}
.more {
  width: 32px;
  height: 32px;
  margin-left: 30px;
}
.workspace {
  flex: 1;
  min-height: 0;
  display: flex;
}

/* list view */
.listview {
  width: 694px;
  flex: none;
  box-sizing: border-box;
  border-right: 2px solid #e0e0e0;
}
.lv-head {
  height: 97px;
  box-sizing: border-box;
  border-bottom: 3px solid #dedede;
  display: flex;
  align-items: center;
  font-size: 25.6px;
}
.lv-tab {
  height: 97px;
  box-sizing: border-box;
  padding-top: 1px;
  line-height: 97px;
  white-space: nowrap;
}
.lv-tab.current {
  width: 164px;
  padding-left: 25px;
  border-bottom: 3px solid #3858e9;
}
.lv-tab:not(.current) {
  margin-left: 33px;
}
.lv-close {
  width: 20px;
  height: 20px;
  margin-left: auto;
  margin-right: 38px;
}
.lv-rows {
  padding-top: 8px;
}
.lv-row {
  width: 684px;
  height: 64px;
  box-sizing: border-box;
  display: flex;
  align-items: center;
  font-size: 25.4px;
  border-radius: 0 4px 4px 0;
  white-space: nowrap;
}
.lv-row.selected {
  background: #3858e9;
  color: #fff;
}
.lv-arrow {
  width: 32px;
  height: 32px;
  margin-right: 12px;
  flex: none;
  display: flex;
  align-items: center;
  justify-content: center;
}
.lv-arrow svg {
  width: 24px;
  height: 24px;
}
.lv-arrow svg.right {
  transform: rotate(-90deg);
}
.lv-ic {
  width: 40px;
  height: 48px;
  flex: none;
  color: #0b6aa8;
}
.lv-label {
  margin-left: 12px;
}
.lv-more {
  width: 8px;
  height: 32px;
  margin-left: auto;
  margin-right: 28px;
}

/* canvas */
.canvas-wrap {
  width: 1641px;
  flex: none;
  display: flex;
  flex-direction: column;
}
.canvas {
  position: relative;
  flex: 1;
  min-height: 0;
  overflow: hidden;
  background: #f6f6f6;
  font-family: "Liberation Serif", serif;
  color: #374151;
}
.note {
  margin: 0 0 0 840px;
  height: 30px;
  font-size: 42px;
  line-height: 30px;
  white-space: nowrap;
}
.block-toolbar {
  position: absolute;
  left: 714px;
  top: 54px;
  display: flex;
  gap: 18px;
  z-index: 2;
  font-family: Inter, "Liberation Sans", sans-serif;
  color: #1e1e1e;
}
.bt-group {
  height: 95px;
  box-sizing: border-box;
  border: 2px solid #1e1e1e;
  border-radius: 3px;
  background: #fff;
  display: flex;
}
.bt-parent {
  width: 95px;
  align-items: center;
  justify-content: center;
}
.bt-dark {
  color: #1e1e1e;
}
.bt-main {
  width: 691px;
}
.bt-seg {
  height: 100%;
  box-sizing: border-box;
  border-right: 2px solid #1e1e1e;
  display: flex;
  align-items: center;
}
.bt-seg:last-child {
  border-right: 0;
}
.bt-move {
  width: 226px;
  padding-left: 27px;
}
.bt-kb {
  width: 40px;
  height: 48px;
}
.bt-drag {
  width: 20px;
  height: 32px;
  margin-left: 42px;
}
.bt-arrows {
  margin-left: 42px;
  display: flex;
  flex-direction: column;
  gap: 18px;
}
.bt-eye {
  width: 104px;
  justify-content: center;
}
.bt-eye svg {
  margin-right: 6px;
}
.bt-mode {
  width: 263px;
  padding-left: 23px;
  font-size: 25.4px;
}
.bt-visual {
  width: 103px;
  height: 60px;
  background: #50575e;
  color: #fff;
  line-height: 60px;
  text-align: center;
}
.bt-html {
  margin-left: 25px;
  font-weight: 500;
}
.bt-dots {
  flex: 1;
  justify-content: center;
}
.bt-dots .more {
  margin-left: 0;
}

.upper {
  position: relative;
  display: flex;
  margin: 76px 0 0 653px;
}
.cond-box {
  position: relative;
  width: 762px;
  height: 281px;
  flex: none;
  box-sizing: border-box;
  border: 2px dashed #ee7c3f;
}
.orange-bit {
  position: absolute;
  left: 640px;
  top: 42px;
  width: 120px;
  height: 3px;
  background: #ee7c3f;
}
.gray-bit {
  position: absolute;
  left: 699px;
  top: 61px;
  width: 144px;
  height: 4px;
  background: #e0e0e0;
}
.picked {
  position: relative;
  width: 644px;
  height: 165px;
  margin: 56px 0 0 57px;
  box-sizing: border-box;
  border: 6px solid #0a7ab8;
  border-radius: 4px;
  padding-top: 46px;
}
.bed-line {
  width: 229px;
  height: 66px;
  box-sizing: border-box;
  margin-left: -2px;
  padding-left: 2px;
  border-bottom: 6px double #e0835a;
  display: flex;
  align-items: center;
  gap: 13px;
  font-size: 41px;
  word-spacing: -6px;
  white-space: nowrap;
}
.bed-ic {
  width: 30px;
  height: 26px;
  flex: none;
  margin-bottom: 14px;
}
.picked-plus {
  position: absolute;
  right: 19px;
  bottom: 0;
  width: 36px;
  height: 36px;
}
.bath-box {
  flex: 1;
  height: 268px;
  box-sizing: border-box;
  border-top: 2px dashed #ee7c3f;
  border-bottom: 2px dashed #ee7c3f;
  padding: 61px 0 0 63px;
  display: flex;
  overflow: hidden;
  gap: 43px;
}
.bath-ic {
  width: 30px;
  height: 34px;
  margin-top: 10px;
  flex: none;
}
.bath-text {
  font-size: 41px;
  line-height: 58px;
  white-space: nowrap;
}

.columns {
  display: flex;
  height: 960px;
  margin: 22px 0 0 19px;
  overflow: hidden;
}
.col {
  position: relative;
  flex: none;
  box-sizing: border-box;
  border-top: 2px dashed #ee7c3f;
  border-right: 3px dashed #ee7c3f;
  padding-top: 114px;
}
.col:first-child {
  border-left: 2px dashed #ee7c3f;
}
.badge {
  position: absolute;
  right: -3px;
  top: -2px;
  width: 120px;
  height: 45px;
  background: #ee7c3f;
  color: #fff;
  font-family: Inter, "Liberation Sans", sans-serif;
  font-size: 20.6px;
  line-height: 42px;
  text-align: center;
}
.col-inner {
  width: 284px;
  padding-top: 4px;
}
.col-inner.framed {
  width: 279px;
  height: 900px;
  box-sizing: border-box;
  border: 1px dotted #333;
  padding-top: 5px;
  padding-left: 1px;
  margin-top: -3px;
}
.col-title {
  margin: 0;
  font-size: 45px;
  line-height: 49px;
  font-weight: 700;
  color: #111827;
}
.eye-big {
  width: 40px;
  height: 34px;
  vertical-align: 1px;
}
.col-list {
  list-style: none;
  margin: 0;
  padding: 0;
  font-size: 41.5px;
}
.col-list li {
  position: relative;
}
.col-list li::before {
  content: "";
  position: absolute;
  left: -32px;
  top: calc(0.5lh - 5px);
  width: 12px;
  height: 12px;
  border-radius: 50%;
  background: #3a4556;
}
.eye-small {
  width: 34px;
  height: 30px;
  margin-right: 12px;
  vertical-align: 3px;
}
.misspelt {
  text-decoration: underline dotted #e02020 3px;
  text-underline-offset: 8px;
}
.col-plus {
  position: absolute;
  width: 36px;
  height: 36px;
}
.meta {
  position: relative;
  height: 46px;
  flex: none;
  box-sizing: border-box;
  border-top: 2px solid #d4d4d4;
  padding-left: 46px;
  font-size: 25.3px;
  line-height: 64px;
  overflow: hidden;
  white-space: nowrap;
}
.meta-handle {
  position: absolute;
  left: 756px;
  top: 29px;
  width: 128px;
  height: 8px;
  border-radius: 4px;
  background: #dcdcdc;
}
.meta-chev {
  position: absolute;
  right: 36px;
  top: 20px;
  width: 24px;
  height: 24px;
}

/* settings panel */
.inspector {
  flex: 1;
  min-width: 0;
  box-sizing: border-box;
  border-left: 2px solid #dedede;
  font-size: 25.6px;
}
.ins-head {
  height: 95px;
  box-sizing: border-box;
  border-bottom: 2px solid #e0e0e0;
  display: flex;
  padding-left: 31px;
  align-items: center;
}
.ins-tab {
  line-height: 95px;
  white-space: nowrap;
}
.ins-tab.current {
  width: 130px;
  margin-left: 33px;
  text-align: center;
  border-bottom: 3px solid #3858e9;
  height: 95px;
  box-sizing: border-box;
}
.ins-close {
  width: 20px;
  height: 20px;
  margin-left: auto;
  margin-right: 38px;
}
.ins-card {
  height: 274px;
  box-sizing: border-box;
  border-bottom: 2px solid #e0e0e0;
  padding: 31px 40px 0 31px;
}
.ins-card-title {
  display: flex;
  align-items: center;
  font-weight: 500;
  height: 48px;
}
.ins-kb {
  width: 40px;
  height: 48px;
  margin-left: 3px;
  margin-right: 29px;
}
.ins-card p {
  margin: 18px 0 0;
  line-height: 36.4px;
}
.ins-row {
  height: 96px;
  box-sizing: border-box;
  border-bottom: 2px solid #e0e0e0;
  padding: 0 44px 0 31px;
  display: flex;
  align-items: center;
  justify-content: space-between;
  font-weight: 500;
}
.ins-row.last {
  border-bottom: 0;
}
.ins-row.advanced {
  border-bottom: 0;
}
.ins-chev {
  width: 24px;
  height: 24px;
}
.ins-help {
  margin: 0;
  padding: 38px 20px 22px 0;
  border-bottom: 2px solid #e0e0e0;
  line-height: 38px;
}

.crumbs {
  height: 69px;
  box-sizing: border-box;
  border-top: 2px solid #dcdcdc;
  padding-left: 62px;
  display: flex;
  align-items: center;
  font-size: 27.9px;
  font-weight: 600;
  color: #0b6aa8;
  white-space: nowrap;
}
.crumb-chev {
  width: 24px;
  height: 24px;
  margin: 0 21px;
}
</style>
